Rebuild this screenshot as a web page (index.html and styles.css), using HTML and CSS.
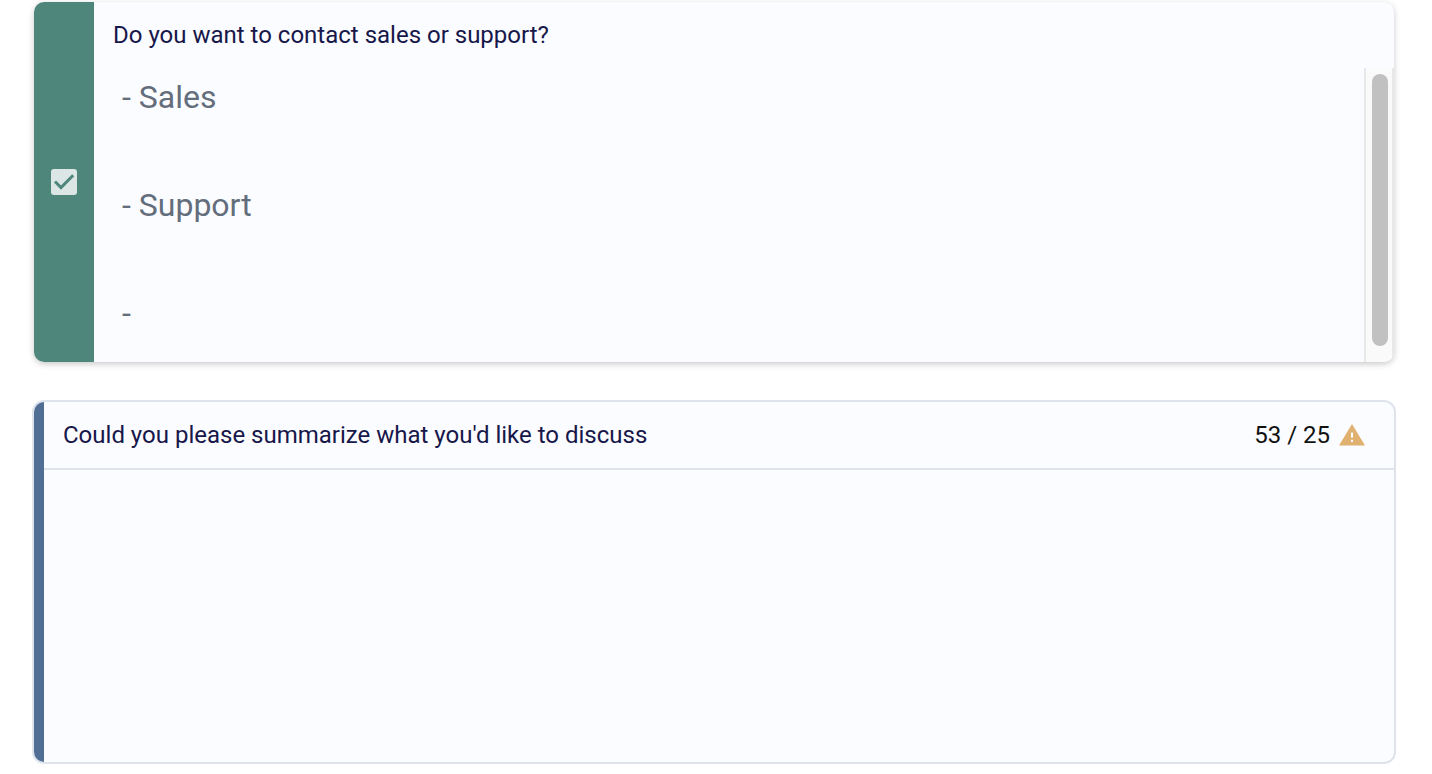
FILE: index.html
```html
<!DOCTYPE html>
<html lang="en">
<head>
<meta charset="utf-8">
<meta name="viewport" content="width=device-width, initial-scale=1">
<title>Contact form</title>
<link rel="stylesheet" href="styles.css">
</head>
<body>
<main class="form">
  <section class="card card-choice">
    <div class="choice-rail">
      <label class="check">
        <input class="check-input" type="checkbox" checked aria-label="Include question">
        <svg class="check-mark" viewBox="0 0 26 26" aria-hidden="true"><path d="M4 12.5l6 6L22.2 6.2" fill="none" stroke="currentColor" stroke-width="3"/></svg>
      </label>
    </div>
    <div class="card-main">
      <label class="card-title choice-title" for="options">Do you want to contact sales or support?</label>
      <div class="options">
        <textarea class="options-input" id="options" spellcheck="false">- Sales

- Support

-</textarea>
        <div class="scroll-track"><div class="scroll-thumb"></div></div>
      </div>
    </div>
  </section>
  <section class="card card-text">
    <div class="text-rail"></div>
    <div class="card-main">
      <header class="text-header">
        <label class="card-title" for="summary">Could you please summarize what you'd like to discuss</label>
        <div class="counter">
          <span>53 / 25</span>
          <svg class="warning" viewBox="0 0 26 22" role="img" aria-label="Over the limit"><path d="M13 0L26 21.6H0z" fill="#e0b070"/><path d="M12 8.5h2v5h-2zM12 15.8h2v2.2h-2z" fill="#fbfcff"/></svg>
        </div>
      </header>
      <textarea class="summary-input" id="summary"></textarea>
    </div>
  </section>
</main>
</body>
</html>
```
FILE: styles.css
```css
* {
  box-sizing: border-box;
}

body {
  margin: 0;
  background: #fff;
  color: #17174a;
  font-family: Roboto, "Liberation Sans", sans-serif;
  font-size: 24px;
  line-height: 32px;
}

.form {
  display: flex;
  flex-direction: column;
  gap: 38px;
  padding: 2px 36px 10px 32px;
}

.card {
  display: flex;
  overflow: hidden;
  background: #fbfcff;
}

.card-choice {
  margin: 0 2px;
  border-radius: 10px;
  box-shadow: 0 2px 6px rgba(0, 0, 0, .22);
}

.choice-rail {
  display: flex;
  flex: 0 0 60px;
  align-items: center;
  justify-content: center;
  background: #4f867b;
}

.check {
  display: grid;
  color: #4f867b;
}

.check-input {
  grid-area: 1 / 1;
  width: 26px;
  height: 26px;
  margin: 0;
  appearance: none;
  border-radius: 3px;
  background: #dce7e5;
}

.check-mark {
  grid-area: 1 / 1;
  width: 26px;
  height: 26px;
  visibility: hidden;
  pointer-events: none;
}

.check-input:checked + .check-mark {
  visibility: visible;
}

.card-main {
  display: flex;
  flex: 1;
  flex-direction: column;
  min-width: 0;
}

.choice-title {
  padding: 17px 19px;
}

.options {
  display: flex;
}

textarea {
  display: block;
  margin: 0;
  border: 0;
  outline: 0;
  resize: none;
  overflow: hidden;
  background: transparent;
  font-family: inherit;
}

.options-input {
  flex: 1;
  min-width: 0;
  height: 294px;
  padding: 2px 28px;
  color: #646d7c;
  font-size: 32px;
  line-height: 54px;
}

.scroll-track {
  flex: 0 0 30px;
  padding: 6px 4px 16px 6px;
  border: solid #e8e8e8;
  border-width: 0 2px;
  background: #fafafa;
}

.scroll-thumb {
  width: 16px;
  height: 100%;
  border-radius: 8px;
  background: #c1c1c1;
}

.card-text {
  border: 2px solid #dfe4ec;
  border-radius: 12px;
}

.text-rail {
  flex: 0 0 10px;
  background: #516f94;
}

.text-header {
  display: flex;
  align-items: center;
  justify-content: space-between;
  padding: 17px 29px 17px 19px;
  border-bottom: 2px solid #dfe4ec;
}

.counter {
  display: flex;
  align-items: center;
  gap: 9px;
  color: #111;
}

.warning {
  width: 26px;
  height: 22px;
}

.summary-input {
  width: 100%;
  height: 292px;
  padding: 16px 19px;
  color: #646d7c;
  font-size: 24px;
  line-height: 32px;
}
```
